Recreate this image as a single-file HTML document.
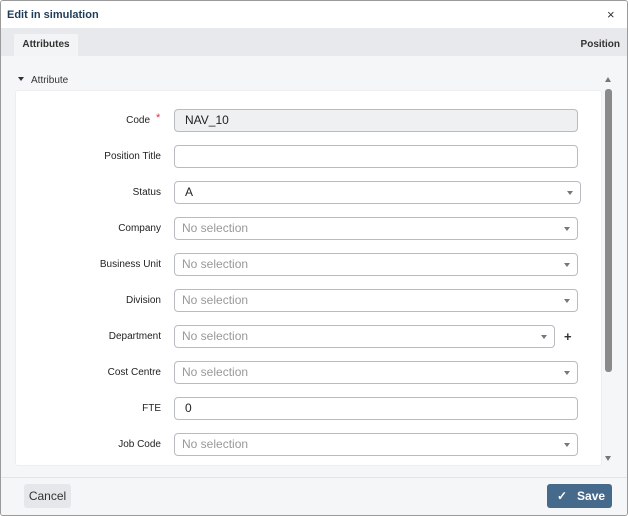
<!DOCTYPE html>
<html><head><style>
*{box-sizing:border-box;margin:0;padding:0}
body{width:628px;height:516px;overflow:hidden;font-family:"Liberation Sans",Arial,sans-serif;background:#fff;position:relative}
.dlg{position:absolute;left:0;top:0;width:628px;height:516px;border:1px solid #9a9a9a;border-radius:3px;background:#f5f6f8;overflow:hidden}
.hdr{position:absolute;left:0;top:0;width:626px;height:27px;background:#fff}
.title{position:absolute;left:6px;top:8px;font-size:11px;font-weight:bold;color:#1f3d5a}
.x{position:absolute;left:606px;top:6px;font-size:13px;color:#333}
.tabs{position:absolute;left:0;top:27px;width:626px;height:28px;background:#e8e9ec}
.tab{position:absolute;left:13px;top:6px;width:64px;height:22px;background:#f3f4f6;font-size:10px;font-weight:bold;color:#333;text-align:center;line-height:22px}
.pos{position:absolute;right:7px;top:11px;font-size:10px;font-weight:bold;color:#333}
.sec{position:absolute;left:17px;top:74px;font-size:10px;color:#333}
.sec:before{content:"";display:inline-block;border-left:3.5px solid transparent;border-right:3.5px solid transparent;border-top:4px solid #333;margin-right:7px;vertical-align:2px}
.panel{position:absolute;left:14px;top:89px;width:587px;height:376px;background:#fff;border-radius:3px;border:1px solid #eceef0}
.lbl{position:absolute;right:466px;font-size:10px;color:#222;text-align:right}
.inp{position:absolute;left:173px;width:404px;height:23px;border:1px solid #b8bcc2;border-radius:4px;background:#fff;font-size:12px;color:#222;padding-left:10px;line-height:21px}
.inp.ph{color:#999;padding-left:7px}
.inp.dd:after{content:"";position:absolute;right:7px;top:9px;border-left:3px solid transparent;border-right:3px solid transparent;border-top:4px solid #777}
.sb{position:absolute;left:604px;top:88px;width:7px;height:283px;background:#8a8a8a;border-radius:3px}
.au{position:absolute;left:604px;top:76px;border-left:3.5px solid transparent;border-right:3.5px solid transparent;border-bottom:5px solid #777}
.ad{position:absolute;left:604px;top:455px;border-left:3.5px solid transparent;border-right:3.5px solid transparent;border-top:5px solid #777}
.foot{position:absolute;left:0;top:476px;width:626px;height:40px;border-top:1px solid #e3e4e7;background:#f5f6f8}
.cancel{position:absolute;left:23px;top:483px;width:47px;height:24px;background:#e6e7ea;border-radius:3px;font-size:12px;color:#333;text-align:center;line-height:24px}
.save{position:absolute;left:546px;top:483px;width:65px;height:24px;background:#456a8c;border-radius:3px;font-size:12px;font-weight:bold;color:#fff;line-height:24px;padding-left:10px}
</style></head><body>
<div class="dlg">
<div class="hdr"><div class="title">Edit in simulation</div><div class="x">×</div></div>
<div class="tabs"><div class="tab">Attributes</div><div class="pos">Position</div></div>
<div class="sec">Attribute</div>
<div class="panel"></div>
<div class="sb"></div><div class="au"></div><div class="ad"></div>

<div class="lbl" style="top:114px;right:477px">Code</div><div style="position:absolute;left:155px;top:111px;color:#d33;font-size:11px">*</div>
<div class="inp" style="top:108px;background:#eef0f2">NAV_10</div>
<div class="lbl" style="top:150px">Position Title</div><div class="inp" style="top:144px"></div>
<div class="lbl" style="top:186px">Status</div><div class="inp dd" style="top:180px;width:407px">A</div>
<div class="lbl" style="top:222px">Company</div><div class="inp dd ph" style="top:216px">No selection</div>
<div class="lbl" style="top:258px">Business Unit</div><div class="inp dd ph" style="top:252px">No selection</div>
<div class="lbl" style="top:294px">Division</div><div class="inp dd ph" style="top:288px">No selection</div>
<div class="lbl" style="top:330px">Department</div><div class="inp dd ph" style="top:324px;width:381px">No selection</div>
<div style="position:absolute;left:563px;top:328px;font-size:13px;font-weight:bold;color:#333">+</div>
<div class="lbl" style="top:366px">Cost Centre</div><div class="inp dd ph" style="top:360px">No selection</div>
<div class="lbl" style="top:402px">FTE</div><div class="inp" style="top:396px">0</div>
<div class="lbl" style="top:438px">Job Code</div><div class="inp dd ph" style="top:432px">No selection</div>

<div class="foot"></div>
<div class="cancel">Cancel</div>
<div class="save">✓ &nbsp; Save</div>
</div>
</body></html>
